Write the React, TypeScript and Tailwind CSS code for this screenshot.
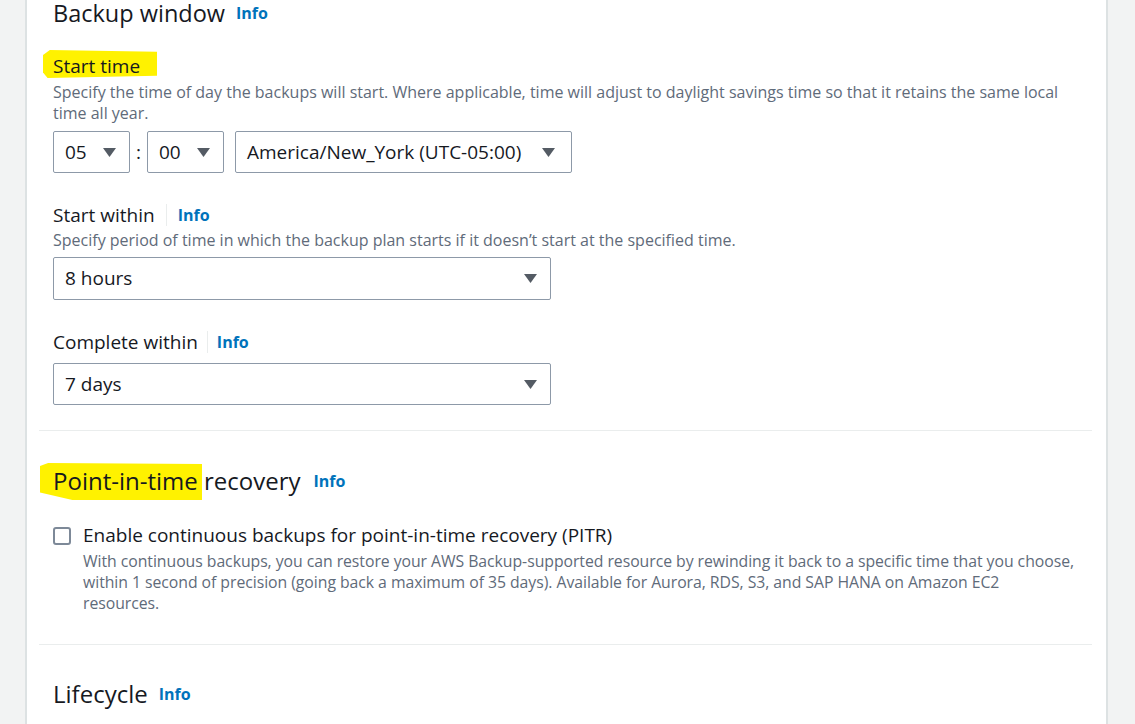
import { useState } from "react";

const labelCls = "text-[19px] leading-[24px] text-[#16191f]";
const descCls = "text-[16px] leading-[21px] text-[#5f6b7a]";

function Info() {
  return (
    <span className="text-[16px] font-bold text-[#0073bb] leading-[24px]">Info</span>
  );
}

function Caret() {
  return (
    <svg width="13" height="9" viewBox="0 0 13 9" className="shrink-0">
      <path d="M0 0 H13 L6.5 9 Z" fill="#545b64" />
    </svg>
  );
}

function Select({ value, className }: { value: string; className: string }) {
  return (
    <div
      className={`flex items-center justify-between rounded-[2px] border border-[#8d99a8] bg-white pl-[11px] pr-[13px] ${className}`}
    >
      <span className="text-[19px] text-[#16191f]">{value}</span>
      <Caret />
    </div>
  );
}

function Highlight({ className }: { className: string }) {
  // marker annotation drawn over the screenshot
  return <span className={`absolute bg-[#fff200] ${className}`} />;
}

export default function App() {
  const [pitr, setPitr] = useState(false);

  return (
    <div className="flex h-[724px] w-[1135px] overflow-hidden bg-[#f2f3f3] pl-[25px] pr-[27px] font-['Open_Sans',sans-serif]">
      <div className="flex-1 border-x-2 border-[#dde2e3] bg-white pl-[12px] pr-[14px]">
        {/* Backup window */}
        <section className="px-[14px] pb-[25px]">
          <h2 className="flex items-center gap-[11px] text-[23.5px] leading-[26px] text-[#16191f]">
            Backup window <Info />
          </h2>

          <div className="relative mt-[28px]">
            <Highlight className="left-[-10px] top-[-4px] h-[28px] w-[114px] [clip-path:polygon(6%_0,100%_6%,100%_92%,4%_100%,0_80%,0_18%)]" />
            <div className={`relative ${labelCls}`}>Start time</div>
          </div>
          <p className={`mt-[4px] ${descCls}`}>
            Specify the time of day the backups will start. Where applicable, time will adjust to daylight savings time so that it retains the same local
            time all year.
          </p>
          <div className="mt-[7px] flex items-center">
            <Select value="05" className="h-[42px] w-[77px]" />
            <span className="w-[17px] text-center text-[19px] text-[#16191f]">:</span>
            <Select value="00" className="h-[42px] w-[77px]" />
            <Select value="America/New_York (UTC-05:00)" className="ml-[11px] h-[42px] w-[337px] pr-[16px]" />
          </div>

          <div className={`mt-[30px] flex items-center ${labelCls}`}>
            <span>Start within</span>
            <span className="mx-[11px] h-[22px] w-px bg-[#eaeded]" />
            <Info />
          </div>
          <p className={`mt-[3px] ${descCls}`}>
            Specify period of time in which the backup plan starts if it doesn’t start at the specified time.
          </p>
          <Select value="8 hours" className="mt-[6px] h-[43px] w-[498px]" />

          <div className={`mt-[30px] flex items-center ${labelCls}`}>
            <span>Complete within</span>
            <span className="mx-[9px] h-[22px] w-px bg-[#eaeded]" />
            <Info />
          </div>
          <Select value="7 days" className="mt-[9px] h-[42px] w-[498px]" />
        </section>

        <div className="h-px bg-[#eaeded]" />

        {/* Point-in-time recovery */}
        <section className="px-[14px] pb-[30px] pt-[36px]">
          <div className="relative">
            <Highlight className="left-[-13px] top-[-4px] h-[37px] w-[162px] [clip-path:polygon(0_8%,5%_0,100%_3%,100%_100%,20%_100%,0_80%)]" />
            <h2 className="relative flex items-center gap-[13px] text-[24px] leading-[28px] text-[#16191f]">
              Point-in-time recovery <Info />
            </h2>
          </div>

          <label className="mt-[28px] flex cursor-pointer items-start">
            <input
              type="checkbox"
              checked={pitr}
              onChange={(e) => setPitr(e.target.checked)}
              className="mt-[4px] h-[18px] w-[18px] shrink-0 appearance-none rounded-[3px] border-2 border-[#7d8998] bg-white"
            />
            <div className="ml-[12px] mr-[-14px]">
              <div className={labelCls}>Enable continuous backups for point-in-time recovery (PITR)</div>
              <p className="mt-[4px] text-[15.8px] leading-[21px] tracking-[-0.05px] text-[#5f6b7a]">
                With continuous backups, you can restore your AWS Backup-supported resource by rewinding it back to a specific time that you choose,
                <br />
                within 1 second of precision (going back a maximum of 35 days). Available for Aurora, RDS, S3, and SAP HANA on Amazon EC2
                <br />
                resources.
              </p>
            </div>
          </label>
        </section>

        <div className="h-px bg-[#eaeded]" />

        {/* Lifecycle */}
        <section className="px-[14px] pt-[35px]">
          <h2 className="flex items-center gap-[11px] text-[24px] leading-[28px] text-[#16191f]">
            Lifecycle <Info />
          </h2>
        </section>
      </div>
    </div>
  );
}
